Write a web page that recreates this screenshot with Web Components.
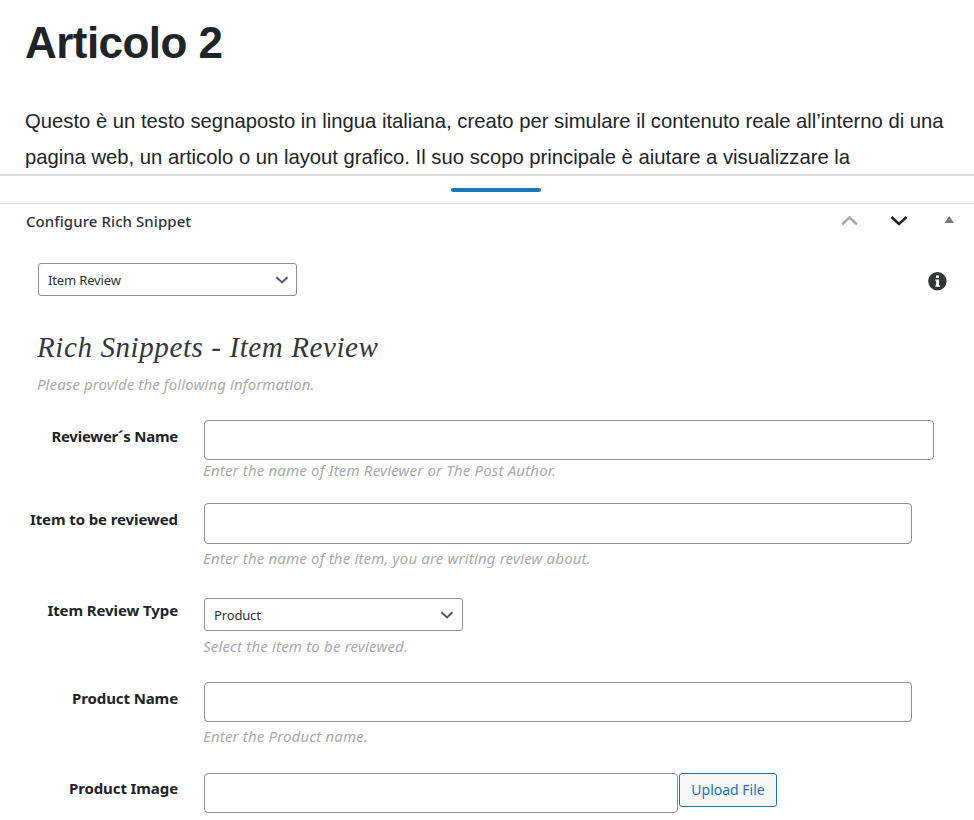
<!DOCTYPE html>
<html lang="it">
<head>
<meta charset="utf-8">
<title>Articolo 2</title>
<style>
  body {
    margin: 0;
    height: 820px;
    overflow: hidden;
    background: #fff;
    color: #1d2327;
    font-family: "Noto Sans", "Open Sans", sans-serif;
  }
</style>
</head>
<body>
<post-preview>
  <span slot="title">Articolo 2</span>
  Questo è un testo segnaposto in lingua italiana, creato per simulare il contenuto reale all’interno di una<br>pagina web, un articolo o un layout grafico. Il suo scopo principale è aiutare a visualizzare la
</post-preview>
<pane-resizer></pane-resizer>
<meta-box>
  <span slot="title">Configure Rich Snippet</span>
  <snippet-toolbar><select-box value="Item Review"></select-box></snippet-toolbar>
  <snippet-intro>
    <span slot="title">Rich Snippets - Item Review</span>
    Please provide the following information.
  </snippet-intro>
  <field-row label="Reviewer´s Name" style="--height: 83px; --label-spacing: -0.25px">
    <text-box style="--width: 730px"></text-box>
    <span slot="help">Enter the name of Item Reviewer or The Post Author.</span>
  </field-row>
  <field-row label="Item to be reviewed" style="--height: 95px; --help-gap: 4px">
    <text-box style="--width: 708px; --box-height: 41px"></text-box>
    <span slot="help">Enter the name of the item, you are writing review about.</span>
  </field-row>
  <field-row label="Item Review Type" style="--height: 84px; --label-top: 2px; --help-gap: 5px">
    <select-box value="Product" style="--arrow-inset: 8px"></select-box>
    <span slot="help">Select the item to be reviewed.</span>
  </field-row>
  <field-row label="Product Name" style="--height: 91px; --help-gap: 4px">
    <text-box style="--width: 708px"></text-box>
    <span slot="help">Enter the Product name.</span>
  </field-row>
  <field-row label="Product Image" style="--label-top: 5px">
    <text-box style="--width: 474px"></text-box>
    <upload-button>Upload File</upload-button>
  </field-row>
</meta-box>

<script>
class PostPreview extends HTMLElement {
  constructor() {
    super();
    this.attachShadow({ mode: "open" }).innerHTML = `
      <style>
        :host {
          display: block;
          box-sizing: border-box;
          height: 174px;
          padding: 18px 0 0 25px;
          overflow: hidden;
          color: #212427;
          font-family: "Liberation Sans", Arial, sans-serif;
        }

        h1 {
          margin: 0 0 35px;
          font-size: 44px;
          line-height: 50px;
          letter-spacing: -0.55px;
          white-space: nowrap;
        }

        p {
          margin: 0;
          font-size: 20.25px;
          line-height: 36px;
          white-space: nowrap;
        }
      </style>
      <h1><slot name="title"></slot></h1>
      <p><slot></slot></p>
    `;
  }
}

class PaneResizer extends HTMLElement {
  constructor() {
    super();
    this.attachShadow({ mode: "open" }).innerHTML = `
      <style>
        :host {
          display: flex;
          justify-content: center;
          box-sizing: border-box;
          height: 30px;
          padding: 12px 0 0 18px;
          border-top: 2px solid #dcdcdc;
          border-bottom: 1px solid #dcdcdc;
        }

        span {
          width: 90px;
          height: 4px;
          border-radius: 2px;
          background: #1e77bb;
        }
      </style>
      <span></span>
    `;
  }
}

class MetaBox extends HTMLElement {
  constructor() {
    super();
    this.attachShadow({ mode: "open" }).innerHTML = `
      <style>
        :host {
          display: block;
        }

        header {
          display: flex;
          align-items: flex-start;
          justify-content: space-between;
          height: 59px;
          padding: 7px 19px 0 26px;
          box-sizing: border-box;
          color: #2c3338;
          font-size: 15px;
          font-weight: 500;
          line-height: 21px;
          letter-spacing: 0.07px;
        }

        svg {
          display: block;
        }
      </style>
      <header>
        <slot name="title"></slot>
        <svg width="114" height="20" viewBox="0 0 114 20" fill="none" stroke-width="2.5">
          <path d="M1 13.5 8.5 6.5 16 13.5" stroke="#a7aaad"/>
          <path d="M50.5 6 58 13 65.5 6" stroke="#1d2327"/>
          <path d="M103.5 12H113L108.2 5Z" fill="#787c82"/>
        </svg>
      </header>
      <slot></slot>
    `;
  }
}

class SnippetToolbar extends HTMLElement {
  constructor() {
    super();
    this.attachShadow({ mode: "open" }).innerHTML = `
      <style>
        :host {
          display: flex;
          align-items: center;
          justify-content: space-between;
          height: 33px;
          padding: 0 27px 0 38px;
        }

        svg {
          margin-top: 3px;
        }
      </style>
      <slot></slot>
      <svg width="20" height="20" viewBox="0 0 20 20">
        <circle cx="10.4" cy="10.3" r="9.2" fill="#32373c"/>
        <path d="M9 4.5h3v2.6H9zM8.2 8.5H12v6h1v1.3H8.2v-1.3H9V9.8h-.8z" fill="#fff"/>
      </svg>
    `;
  }
}

class SnippetIntro extends HTMLElement {
  constructor() {
    super();
    this.attachShadow({ mode: "open" }).innerHTML = `
      <style>
        :host {
          display: block;
          box-sizing: border-box;
          height: 124px;
          padding: 34px 0 0 37px;
        }

        h2 {
          margin: 0;
          color: #32373c;
          font: italic 400 29px/34px Georgia, "Liberation Serif", serif;
          letter-spacing: 0.6px;
        }

        p {
          margin: 10px 0 0;
          color: #aaa;
          font-size: 15px;
          font-style: italic;
          line-height: 21px;
          letter-spacing: 0.11px;
        }
      </style>
      <h2><slot name="title"></slot></h2>
      <p><slot></slot></p>
    `;
  }
}

class FieldRow extends HTMLElement {
  constructor() {
    super();
    this.attachShadow({ mode: "open" });
  }

  connectedCallback() {
    this.shadowRoot.innerHTML = `
      <style>
        :host {
          display: grid;
          grid-template-columns: 178px 1fr;
          column-gap: 26px;
          height: var(--height, 47px);
        }

        label {
          padding-top: var(--label-top, 6px);
          text-align: right;
          font-size: 15px;
          font-weight: 700;
          line-height: 21px;
          letter-spacing: var(--label-spacing, -0.1px);
          white-space: nowrap;
        }

        .control {
          display: flex;
          align-items: flex-start;
          gap: 1px;
        }

        .help {
          margin: var(--help-gap, 0) 0 0 -1px;
          color: #aaa;
          font-size: 15px;
          font-style: italic;
          line-height: 21px;
          letter-spacing: 0.17px;
        }
      </style>
      <label>${this.getAttribute("label")}</label>
      <div>
        <div class="control"><slot></slot></div>
        <div class="help"><slot name="help"></slot></div>
      </div>
    `;
  }
}

class TextBox extends HTMLElement {
  constructor() {
    super();
    this.attachShadow({ mode: "open" }).innerHTML = `
      <style>
        :host {
          display: block;
          width: var(--width);
        }

        input {
          display: block;
          box-sizing: border-box;
          width: 100%;
          height: var(--box-height, 40px);
          margin: 0;
          padding: 0 8px;
          border: 1px solid #8c8f94;
          border-radius: 4px;
          background: #fff;
          font: inherit;
        }
      </style>
      <input type="text">
    `;
  }
}

class SelectBox extends HTMLElement {
  constructor() {
    super();
    this.attachShadow({ mode: "open" });
  }

  connectedCallback() {
    this.shadowRoot.innerHTML = `
      <style>
        :host {
          display: flex;
          align-items: center;
          justify-content: space-between;
          box-sizing: border-box;
          width: 259px;
          height: 33px;
          padding: 0 var(--arrow-inset, 7px) 0 9px;
          border: 1px solid #8c8f94;
          border-radius: 3px;
          color: #2c3338;
          font-size: 13px;
          line-height: 20px;
          letter-spacing: -0.15px;
        }
      </style>
      <span>${this.getAttribute("value")}</span>
      <svg width="14" height="14" viewBox="0 0 14 14" fill="none" stroke="#50575e" stroke-width="2">
        <path d="M1.5 4.2 7 9.4 12.5 4.2"/>
      </svg>
    `;
  }
}

class UploadButton extends HTMLElement {
  constructor() {
    super();
    this.attachShadow({ mode: "open" }).innerHTML = `
      <style>
        :host {
          display: block;
        }

        button {
          display: block;
          width: 98px;
          height: 34px;
          padding: 0 0 1px;
          border: 1px solid #2271b1;
          border-radius: 3px;
          background: #f6f7f7;
          color: #2271b1;
          font-family: inherit;
          font-size: 14px;
          white-space: nowrap;
        }
      </style>
      <button type="button"><slot></slot></button>
    `;
  }
}

customElements.define("post-preview", PostPreview);
customElements.define("pane-resizer", PaneResizer);
customElements.define("meta-box", MetaBox);
customElements.define("snippet-toolbar", SnippetToolbar);
customElements.define("snippet-intro", SnippetIntro);
customElements.define("field-row", FieldRow);
customElements.define("text-box", TextBox);
customElements.define("select-box", SelectBox);
customElements.define("upload-button", UploadButton);
</script>
</body>
</html>
